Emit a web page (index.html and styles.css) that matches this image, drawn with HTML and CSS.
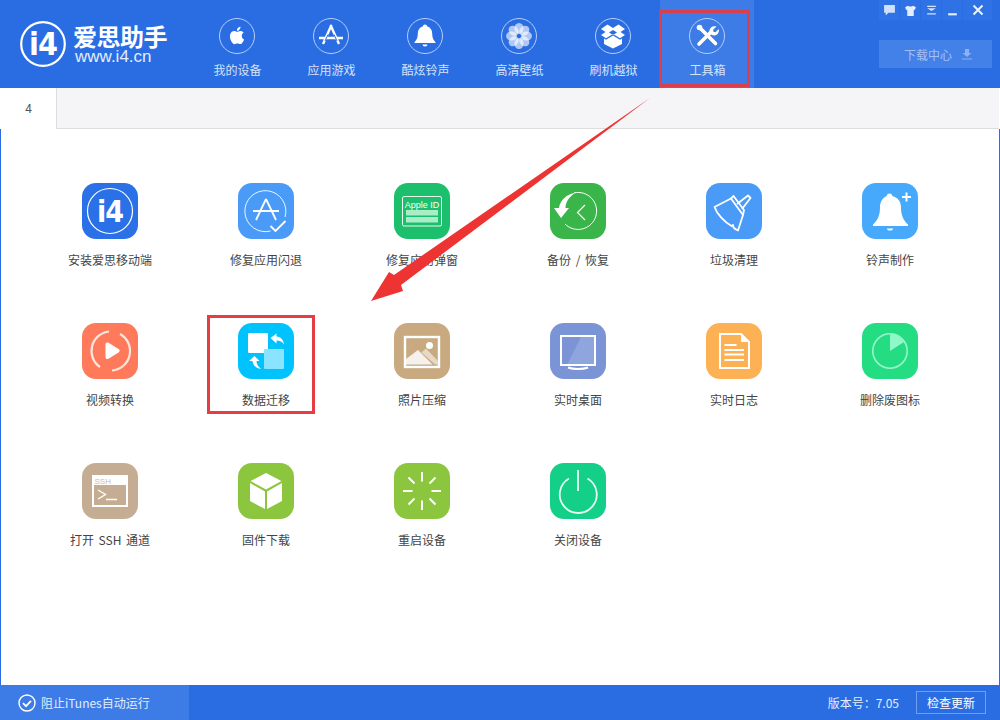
FILE: index.html
```html
<!DOCTYPE html>
<html lang="zh-CN">
<head>
  <meta charset="UTF-8" />
  <title>爱思助手</title>
  <link rel="stylesheet" href="styles.css">
</head>
<body>

  <div class="app">
    <header class="top">
      <div class="logo">
        <svg class="logo-mark" viewBox="0 0 48 48" width="48" height="48">
          <circle cx="24" cy="24" r="21.8" fill="none" stroke="#fff" stroke-width="2.2"/>
          <text x="24" y="35" text-anchor="middle" class="logo-i4">i4</text>
        </svg>
        <div class="logo-text">
          <div class="logo-name">爱思助手</div>
          <div class="logo-url">www.i4.cn</div>
        </div>
      </div>

      <nav class="nav">
        <div class="nav-item">
          <svg class="nav-icon" viewBox="0 0 36 36">
            <circle cx="18" cy="18" r="17.5" class="ring"/>
            <g transform="translate(7.6 7) scale(.87)"><path fill="#fff" d="M18.71 19.5c-.83 1.24-1.71 2.45-3.05 2.47-1.34.03-1.77-.79-3.29-.79-1.53 0-2 .77-3.27.82-1.31.05-2.3-1.32-3.14-2.53C4.25 17 2.94 12.45 4.7 9.39c.87-1.52 2.43-2.48 4.12-2.51 1.28-.02 2.5.87 3.29.87.78 0 2.26-1.07 3.81-.91.65.03 2.47.26 3.64 1.98-.09.06-2.17 1.28-2.15 3.81.03 3.02 2.65 4.03 2.68 4.04-.03.07-.42 1.44-1.38 2.83M13 3.5c.73-.83 1.94-1.46 2.94-1.5.13 1.17-.34 2.35-1.04 3.19-.69.85-1.83 1.51-2.95 1.42-.15-1.15.41-2.35 1.05-3.11z"/></g>
          </svg>
          <span>我的设备</span>
        </div>
        <div class="nav-item">
          <svg class="nav-icon" viewBox="0 0 36 36">
            <circle cx="18" cy="18" r="17.5" class="ring"/>
            <path d="M18.5 7 10 26M17.5 7 26 26M6 20h24" fill="none" stroke="#fff" stroke-width="2.4"/>
            <path d="M15 16.5 12 23M21 16.5 24 23" stroke="#2a6de2" stroke-width="1"/>
          </svg>
          <span>应用游戏</span>
        </div>
        <div class="nav-item">
          <svg class="nav-icon" viewBox="0 0 36 36">
            <circle cx="18" cy="18" r="17.5" class="ring"/>
            <path fill="#fff" d="M18 6.500c1.300 0 2 .8 2 1.800 3.400 1 5.200 3.800 5.200 7.200 0 4.500 1.200 6.500 3.300 8.700v.8h-21v-.8c2.100-2.200 3.300-4.200 3.300-8.700 0-3.400 1.800-6.200 5.200-7.200 0-1 .7-1.800 2-1.800zM15.500 26.500h5a2.500 2 0 0 1-5 0z"/>
          </svg>
          <span>酷炫铃声</span>
        </div>
        <div class="nav-item">
          <svg class="nav-icon" viewBox="0 0 36 36">
            <circle cx="18" cy="18" r="17.5" class="ring"/>
            <g fill="#fff" fill-opacity=".62">
              <ellipse cx="18" cy="10.500" rx="4.600" ry="5.500"/>
              <ellipse cx="18" cy="25.500" rx="4.600" ry="5.500"/>
              <ellipse cx="10.500" cy="18" rx="5.500" ry="4.600"/>
              <ellipse cx="25.500" cy="18" rx="5.500" ry="4.600"/>
              <ellipse cx="12.700" cy="12.700" rx="4.600" ry="5.500" transform="rotate(-45 12.700 12.700)"/>
              <ellipse cx="23.300" cy="12.700" rx="4.600" ry="5.500" transform="rotate(45 23.300 12.700)"/>
              <ellipse cx="12.700" cy="23.300" rx="4.600" ry="5.500" transform="rotate(45 12.700 23.300)"/>
              <ellipse cx="23.300" cy="23.300" rx="4.600" ry="5.500" transform="rotate(-45 23.300 23.300)"/>
            </g>
            <circle cx="18" cy="18" r="1.200" fill="#2a6de2"/>
          </svg>
          <span>高清壁纸</span>
        </div>
        <div class="nav-item">
          <svg class="nav-icon" viewBox="0 0 36 36">
            <circle cx="18" cy="18" r="17.5" class="ring"/>
            <path fill="#fff" d="M12.500 6.500 18 10l5.500-3.500L30 11l-4.500 3 4.500 3-5 3.200-7-4.300-7 4.300-5-3.200 4.500-3L6 11zM18 12l-4 2.500 4 2.500 4-2.500z"/>
            <path fill="#fff" d="M9 20.500l2 1.300 7-4.300 7 4.300 2-1.300V26l-9 4.500L9 26z"/>
          </svg>
          <span>刷机越狱</span>
        </div>
        <div class="nav-item active">
          <svg class="nav-icon" viewBox="0 0 36 36">
            <circle cx="18" cy="18" r="17.5" class="ring"/>
            <path d="M11 10 26.500 25.500" stroke="#fff" stroke-width="3.600" stroke-linecap="round"/>
            <path d="M10 26 21.500 14.500" stroke="#fff" stroke-width="3.600" stroke-linecap="round"/>
            <path fill="#fff" d="M27.500 8.500l-3.400 3.200.3 2.100 2.100.4 3.300-3.300c.6 3-1 6.200-4.500 6.600-2.500.3-4.800-1.700-4.800-4.400 0-3.700 3.700-5.800 7-4.600z"/>
            <circle cx="10.500" cy="9.500" r="2.800" fill="#fff"/>
          </svg>
          <span>工具箱</span>
        </div>
      </nav>

      <div class="top-right">
        <div class="win-btns">
          <div class="win-btn">
            <svg viewBox="0 0 12 12" width="13" height="13"><path fill="#cfe0fb" d="M1 1h10v7H5L2.500 10.500V8H1z"/></svg>
          </div>
          <div class="win-btn">
            <svg viewBox="0 0 12 12" width="13" height="13"><path fill="#e4eefd" d="M3.500 1.500 1 3l1 2.500 1-.3V11h6V5.200l1 .3L11 3 8.500 1.500C7.500 2.500 4.500 2.500 3.500 1.500z"/></svg>
          </div>
          <div class="win-btn">
            <svg viewBox="0 0 12 12" width="13" height="13"><path fill="#d6e4fb" d="M2 1.500h8v1.200H2zM2 4h8L6 6.500zM2 8.500h8v1.200H2z"/></svg>
          </div>
          <div class="win-btn">
            <svg viewBox="0 0 12 12" width="13" height="13"><path fill="#e4eefd" d="M2 8.500h8v2H2z"/></svg>
          </div>
          <div class="win-btn close">
            <svg viewBox="0 0 12 12" width="12" height="12"><path stroke="#eef4ff" stroke-width="2" d="M1.500 1.500l9 9M10.500 1.500l-9 9"/></svg>
          </div>
        </div>
        <div class="download">
          <span>下载中心</span>
          <svg viewBox="0 0 12 12" width="12" height="12"><path fill="#8db1f2" d="M4 1h4v4h2.500L6 9 1.500 5H4zM1 10.500h10v1H1z"/></svg>
        </div>
      </div>
    </header>

    <div class="tabs">
      <div class="tab">4</div>
    </div>

    <main class="tools">
      <div class="tool">
        <svg class="tool-icon" viewBox="0 0 56 56">
          <rect width="56" height="56" rx="14" fill="#2a70e6"/>
          <circle cx="28" cy="28" r="22.500" fill="none" stroke="#fff" stroke-width="1.200"/>
          <text x="28" y="39" text-anchor="middle" class="mark-i4">i4</text>
        </svg>
        <span>安装爱思移动端</span>
      </div>
      <div class="tool">
        <svg class="tool-icon" viewBox="0 0 56 56">
          <rect width="56" height="56" rx="14" fill="#4a9bf8"/>
          <path d="M47 34A20.500 20.500 0 1 0 32.500 48" fill="none" stroke="#fff" stroke-width="1" stroke-opacity=".9"/>
          <path d="M28 16 18 37M28 16 38 37M15 28h26" fill="none" stroke="#fff" stroke-width="1.800"/>
          <path d="M32.500 43l5 5 10-10" fill="none" stroke="#fff" stroke-width="1.800"/>
        </svg>
        <span>修复应用闪退</span>
      </div>
      <div class="tool">
        <svg class="tool-icon" viewBox="0 0 56 56">
          <rect width="56" height="56" rx="14" fill="#1cbf6b"/>
          <rect x="8.500" y="13.500" width="39" height="29.500" rx="1.500" fill="none" stroke="#fff" stroke-opacity=".9"/>
          <text x="28" y="25" text-anchor="middle" class="apple-id">Apple ID</text>
          <rect x="12" y="27" width="32" height="5.500" fill="#a8ecc8"/>
          <rect x="12" y="34" width="32" height="5.500" fill="#a8ecc8"/>
        </svg>
        <span>修复应用弹窗</span>
      </div>
      <div class="tool">
        <svg class="tool-icon" viewBox="0 0 56 56">
          <rect width="56" height="56" rx="14" fill="#39b54a"/>
          <path d="M24 9.900A18.500 18.500 0 1 1 15 41" fill="none" stroke="#fff" stroke-width="1"/>
          <path d="M4 25h5C10 17 17 11 25 10 19 14 15.500 19 15.500 25H19L11 35z" fill="#fff"/>
          <path d="M35 22 27.500 29.500 35 37" fill="none" stroke="#fff" stroke-width="1.200"/>
        </svg>
        <span>备份 / 恢复</span>
      </div>
      <div class="tool">
        <svg class="tool-icon" viewBox="0 0 56 56">
          <rect width="56" height="56" rx="14" fill="#4a9bf8"/>
          <g fill="none" stroke="#fff" stroke-width="1.800" stroke-linejoin="round">
            <path d="M8.500 24 25 15.500 37 32 32 47.500c-2-.5-3-1.500-4.500-3l-.5-2.500-1.500 1C19 39 11 31.500 8.500 24z"/>
            <path d="M25 15.500 27.500 13 38 27l-1 5"/>
            <path d="M31 21 42 12.500l2.500 2.500L36 26"/>
          </g>
        </svg>
        <span>垃圾清理</span>
      </div>
      <div class="tool">
        <svg class="tool-icon" viewBox="0 0 56 56">
          <rect width="56" height="56" rx="14" fill="#46a9fb"/>
          <path fill="#fff" d="M27.500 10.500c1.700 0 2.800 1.100 2.800 2.500 6 1.500 8.700 6 8.700 11.500 0 8 2.500 13 7 17v1.500H11v-1.500c4.500-4 7-9 7-17 0-5.500 2.700-10 6.700-11.500 0-1.400 1.100-2.500 2.800-2.500z"/>
          <path fill="#fff" d="M25 45.500h6a3 2 0 0 1-6 0zM40 13h3.500V9.500h2V13H49v2h-3.500v3.500h-2V15H40z"/>
        </svg>
        <span>铃声制作</span>
      </div>

      <div class="tool">
        <svg class="tool-icon" viewBox="0 0 56 56">
          <rect width="56" height="56" rx="14" fill="#ff7a5a"/>
          <path d="M27 8.500A19.500 19.500 0 0 0 18 44" fill="none" stroke="#ffe6de" stroke-width="2.200"/>
          <path d="M30 47.500A19.500 19.500 0 0 0 38 11" fill="none" stroke="#ffe6de" stroke-width="2.200"/>
          <path fill="#fff" d="M23.500 21.500c0-2 1.500-2.500 3-1.700l10 6.200c1.500 1 1.500 2.500 0 3.500l-10 6.200c-1.500.8-3 .3-3-1.700z"/>
        </svg>
        <span>视频转换</span>
      </div>
      <div class="tool">
        <svg class="tool-icon" viewBox="0 0 56 56">
          <rect width="56" height="56" rx="14" fill="#00c3fd"/>
          <rect x="10" y="10" width="20" height="20" rx="1" fill="#fff"/>
          <rect x="26" y="26" width="20" height="20" rx="1" fill="#8ae4ff"/>
          <path fill="#fff" d="M32.500 15l6-4.500v3c4 0 7 3 7.500 8-1.500-2.500-4-4-7.500-4v3zM11 38l5.500-5 5 5h-3c0 3 1.500 5.500 4.500 8-4.500-.5-8-3.500-8.500-8z"/>
        </svg>
        <span>数据迁移</span>
      </div>
      <div class="tool">
        <svg class="tool-icon" viewBox="0 0 56 56">
          <rect width="56" height="56" rx="14" fill="#c9a97f"/>
          <rect x="11" y="14" width="34" height="30" fill="none" stroke="#fff" stroke-width="2.400"/>
          <path fill="#f5f1ec" d="M12 41.500V36L24 27l14.500 14.500z"/>
          <path fill="#e6d8c5" d="M27.500 29.500 32 25.500 44 38v3.500h-3z"/>
          <circle cx="35.500" cy="22.500" r="3.500" fill="#fff"/>
        </svg>
        <span>照片压缩</span>
      </div>
      <div class="tool">
        <svg class="tool-icon" viewBox="0 0 56 56">
          <rect width="56" height="56" rx="14" fill="#7b94d6"/>
          <path fill="#8fa5de" d="M31 14h13v28H17z"/>
          <rect x="11" y="13" width="34" height="29" fill="none" stroke="#fff" stroke-width="2"/>
          <path d="M18 44.500c5 2 15 2 20 0" fill="none" stroke="#fff" stroke-width="2"/>
        </svg>
        <span>实时桌面</span>
      </div>
      <div class="tool">
        <svg class="tool-icon" viewBox="0 0 56 56">
          <rect width="56" height="56" rx="14" fill="#fdb155"/>
          <path d="M14 11h21l8 8v26H14z" fill="none" stroke="#fff" stroke-width="2"/>
          <path d="M35 11l8 8h-8z" fill="#fff"/>
          <path d="M18.500 22h12M18.500 27h19.500M18.500 31.500h19.500M18.500 37h19.500" stroke="#fff" stroke-width="2"/>
        </svg>
        <span>实时日志</span>
      </div>
      <div class="tool">
        <svg class="tool-icon" viewBox="0 0 56 56">
          <rect width="56" height="56" rx="14" fill="#24dd83"/>
          <circle cx="28" cy="28" r="17.200" fill="none" stroke="#9bf5c9" stroke-width="1.600"/>
          <path fill="#8cf9c6" d="M28 11a17 17 0 0 1 14 8L28 28z"/>
        </svg>
        <span>删除废图标</span>
      </div>

      <div class="tool">
        <svg class="tool-icon" viewBox="0 0 56 56">
          <rect width="56" height="56" rx="14" fill="#c4ad92"/>
          <rect x="11" y="13" width="34" height="30" fill="none" stroke="#fff" stroke-width="2"/>
          <rect x="11" y="13" width="34" height="9" fill="#fff"/>
          <text x="12.500" y="20.800" class="ssh">SSH</text>
          <path d="M16 27l7.500 4.500L16 36M24 36.500h11" fill="none" stroke="#fff" stroke-width="1.400"/>
        </svg>
        <span>打开 SSH 通道</span>
      </div>
      <div class="tool">
        <svg class="tool-icon" viewBox="0 0 56 56">
          <rect width="56" height="56" rx="14" fill="#8cc63f"/>
          <path fill="#fff" d="M28 10 43.500 18 28 26.500 12.500 18zM12 20l15 8.500V46L12 38zM44 20v18l-15 8V28.500z"/>
        </svg>
        <span>固件下载</span>
      </div>
      <div class="tool">
        <svg class="tool-icon" viewBox="0 0 56 56">
          <rect width="56" height="56" rx="14" fill="#8cc63f"/>
          <path d="M28 9v9.500M28 37.500V47M9 28h9.500M37.500 28H47M14.500 14.500l6 6M35.500 35.500l6 6M41.500 14.500l-6 6M20.500 35.500l-6 6" stroke="#fff" stroke-width="2" fill="none"/>
        </svg>
        <span>重启设备</span>
      </div>
      <div class="tool">
        <svg class="tool-icon" viewBox="0 0 56 56">
          <rect width="56" height="56" rx="14" fill="#13cf87"/>
          <path d="M19 15.500a18.500 18.500 0 1 0 18.500 0" fill="none" stroke="#e6fff4" stroke-width="1.800"/>
          <path d="M28 7v21" stroke="#e6fff4" stroke-width="1.800"/>
        </svg>
        <span>关闭设备</span>
      </div>
    </main>

    <footer class="bottom">
      <div class="itunes">
        <svg viewBox="0 0 18 18" width="18" height="18">
          <circle cx="9" cy="9" r="8" fill="none" stroke="#fff" stroke-width="1.400"/>
          <path d="M5 9.200l3 3 5-5.400" fill="none" stroke="#fff" stroke-width="1.800"/>
        </svg>
        <span>阻止iTunes自动运行</span>
      </div>
      <div class="version">版本号：7.05</div>
      <div class="update">检查更新</div>
    </footer>

    <!-- annotations drawn over the app -->
    <div class="mark mark-nav"></div>
    <div class="mark mark-tool"></div>
    <svg class="arrow" viewBox="0 0 1000 720" width="1000" height="720">
      <path fill="#ee3333" d="M650 98 394 275 389 272 371 301 403 291 401 285z"/>
    </svg>
  </div>

</body>
</html>
```

FILE: styles.css
```css
* {
  box-sizing: border-box;
}

body {
  margin: 0;
  font-family: "Noto Sans CJK SC", "Liberation Sans", sans-serif;
  font-size: 12px;
  color: #444;
  background-color: #fff;
}

.app {
  position: relative;
  display: flex;
  flex-direction: column;
  width: 1000px;
  height: 720px;
  overflow: hidden;
}

/* top bar */
.top {
  display: flex;
  height: 88px;
  background-color: #2a6de2;
}

.logo {
  display: flex;
  align-items: center;
  gap: 6px;
  width: 190px;
  padding: 0 0 0 19px;
  color: #fff;
}

.logo-mark {
  flex: none;
}

.logo-i4 {
  font-family: "DejaVu Sans", sans-serif;
  font-weight: bold;
  font-stretch: condensed;
  font-size: 32px;
  letter-spacing: -1px;
  fill: #fff;
}

.logo-name {
  font-size: 24px;
  font-weight: 700;
  line-height: 26px;
  letter-spacing: -0.5px;
}

.logo-url {
  padding-left: 2px;
  font-family: "Liberation Sans", sans-serif;
  font-size: 17px;
  line-height: 16px;
  color: #e3edfd;
}

.nav {
  display: flex;
}

.nav-item {
  display: flex;
  flex-direction: column;
  align-items: center;
  width: 94px;
  padding-top: 18px;
  color: #d5e3fb;
}

.nav-item span {
  margin: 6px 0 0 1px;
  line-height: 20px;
}

.nav-item.active {
  background-color: #3d7be6;
}

.nav-icon {
  width: 36px;
  height: 36px;
}

.ring {
  fill: none;
  stroke: #b5cef7;
  stroke-width: 1;
}

.top-right {
  display: flex;
  flex-direction: column;
  align-items: flex-end;
  gap: 20px;
  margin-left: auto;
  padding-right: 8px;
}

.win-btns {
  display: flex;
  gap: 1px;
  height: 20px;
}

.win-btn {
  display: flex;
  align-items: center;
  justify-content: center;
  width: 20px;
  background-color: #2f72e5;
}

.win-btn.close {
  width: 29px;
}

.download {
  display: flex;
  align-items: center;
  gap: 9px;
  width: 113px;
  height: 28px;
  padding-left: 25px;
  background-color: #4380e8;
  color: #a3c0f4;
}

/* tab strip */
.tabs {
  display: flex;
  height: 41px;
  margin: 0 1px;
  background-color: #f5f5f7;
  border-bottom: 1px solid #ddd;
}

.tab {
  width: 56px;
  height: 41px;
  line-height: 40px;
  text-align: center;
  background-color: #fff;
  border-right: 1px solid #ddd;
  color: #555;
}

/* tool grid */
.tools {
  flex: 1;
  display: grid;
  grid-template-columns: repeat(6, 156px);
  grid-auto-rows: 140px;
  padding: 54px 0 0 31px;
  border-left: 1px solid #2a6de2;
  border-right: 1px solid #2a6de2;
}

.tool {
  display: flex;
  flex-direction: column;
  align-items: center;
}

.tool span {
  margin-top: 11px;
  line-height: 20px;
  word-spacing: 2px;
}

.tool-icon {
  width: 56px;
  height: 56px;
}

.mark-i4 {
  font-family: "DejaVu Sans", sans-serif;
  font-weight: bold;
  font-stretch: condensed;
  font-size: 30px;
  letter-spacing: -1px;
  fill: #fff;
}

.apple-id {
  font-family: "Liberation Sans", sans-serif;
  font-size: 9px;
  fill: #fff;
}

.ssh {
  font-family: "Liberation Sans", sans-serif;
  font-size: 8px;
  fill: #cdbba6;
}

/* status bar */
.bottom {
  display: flex;
  align-items: center;
  height: 35px;
  background-color: #2a6de2;
  color: #e3edfd;
}

.itunes {
  display: flex;
  align-items: center;
  gap: 5px;
  width: 189px;
  height: 100%;
  padding-left: 18px;
  background-color: #3d7be6;
}

.version {
  margin-left: auto;
  font-family: "Noto Sans CJK TC", "Liberation Sans", sans-serif;
}

.update {
  width: 70px;
  height: 23px;
  margin: 0 14px 0 17px;
  line-height: 21px;
  text-align: center;
  border: 1px solid #6f9fee;
  color: #fff;
}

/* red annotations */
.mark {
  position: absolute;
  border: 3px solid #e63c44;
}

.mark-nav {
  left: 659px;
  top: 10px;
  width: 91px;
  height: 77px;
  border-color: #d8404f;
}

.mark-tool {
  left: 207px;
  top: 315px;
  width: 108px;
  height: 99px;
}

.arrow {
  position: absolute;
  left: 0;
  top: 0;
}
```
